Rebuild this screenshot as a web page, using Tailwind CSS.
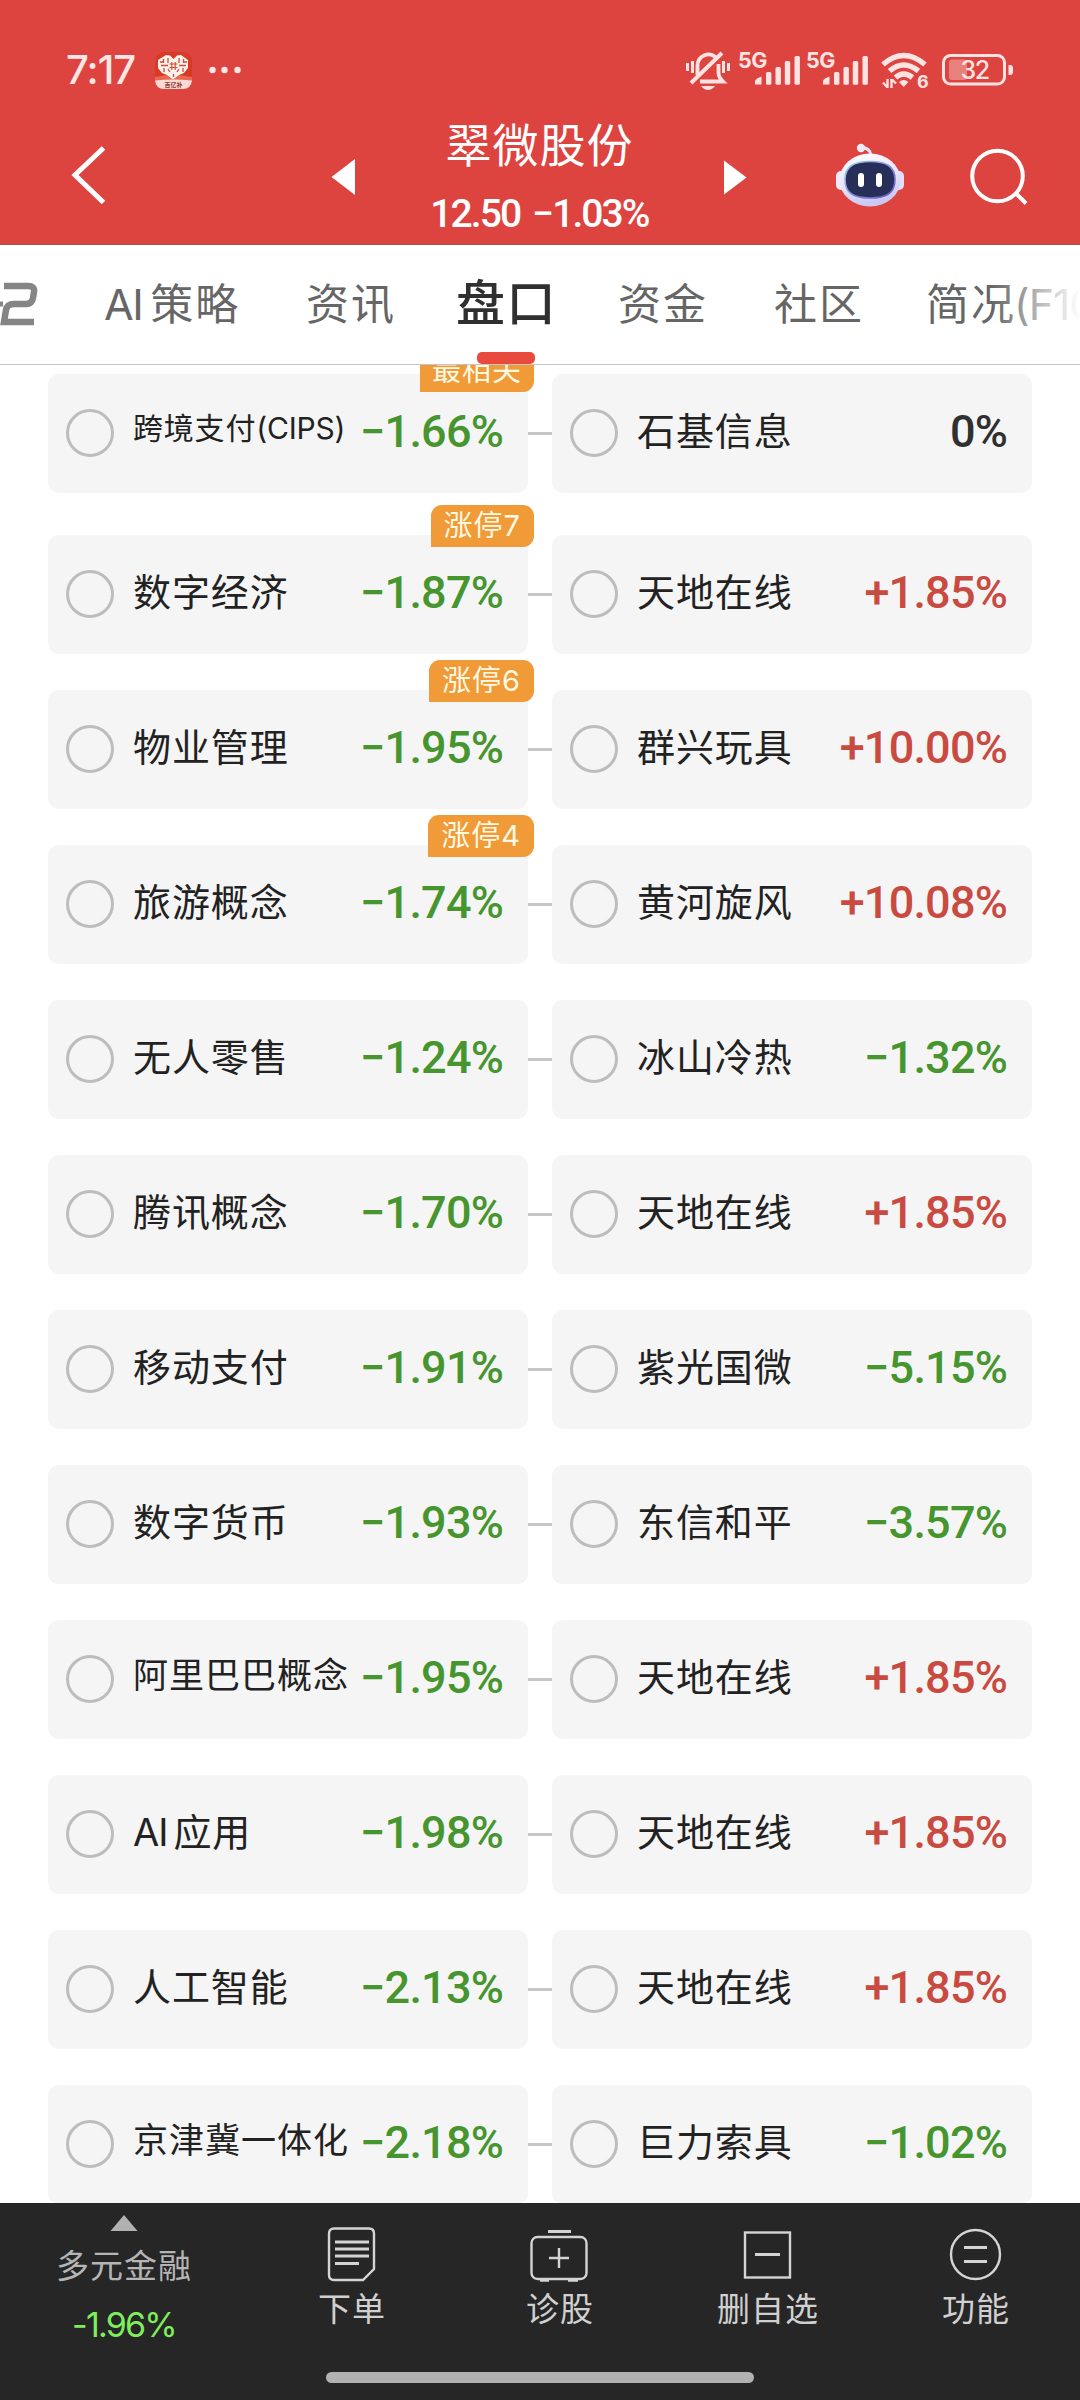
<!DOCTYPE html>
<html lang="zh-CN">
<head>
<meta charset="utf-8">
<title>翠微股份</title>
<script src="https://cdn.jsdelivr.net/npm/@tailwindcss/browser@4"></script>
</head>
<body class="w-[1080px] h-[2400px] overflow-hidden bg-white flex flex-col font-[Inter,'Noto_Sans_CJK_SC',sans-serif]">

<!-- Header -->
<header class="h-[245px] shrink-0 bg-[#dd4440] border-b border-[#a9524e] flex flex-col text-white">
  <div class="h-[92px] pt-[48px] flex items-start">
    <div class="ml-[66px] w-[89px] h-11 leading-[44px] text-[40px] font-medium tracking-[-1px] text-[#fde6e4] font-[Inter]">7:17</div>
    <svg class="mt-1" width="38" height="38" viewBox="0 0 38 38">
      <rect width="37" height="37" rx="9" fill="#d93a25"/>
      <path d="M0 25L18 22L37 25V30H0Z" fill="#e8694f"/>
      <path d="M11 3l4 .5 3.500 3.500 3.500-3.500 4-.5 7 5v8l-4 5-5 2-6 4.500-6-4.500-5-2-4-5V8z" fill="#fff3ec"/>
      <path d="M8.500 7v4M13 6v5M6 13.500h7M24 6v5M28.500 7v4M24 13.500h7M9 16v4M28 16v4M13 17l2 3M24 17l-2 3M18.500 22v3M5 10h4M28 10h4" stroke="#cf4a38" stroke-width="1.300"/>
      <path d="M14.500 12h8M14.500 15.500h8M16.800 10v8M20.200 10v8" stroke="#cf4a38" stroke-width="1.100"/>
      <path d="M0 28.500q18-2 37 0-1 8.500-9 8.500H9q-8 0-9-8.500z" fill="#fbd9d4"/>
      <text x="9.500" y="35" font-size="6" font-weight="700" fill="#8b3a30" font-family="Noto Sans CJK SC">百亿补</text>
    </svg>
    <svg class="ml-4 mt-[18px]" width="32" height="8"><g fill="#fde6e4"><circle cx="3.500" cy="4" r="3.200"/><circle cx="15.500" cy="4" r="3.200"/><circle cx="28.500" cy="4" r="3.200"/></g></svg>
    <!-- status icons -->
    <svg class="ml-[443px]" width="334" height="44" viewBox="684 48 334 44" fill="none" stroke="#fde3e1">
      <g stroke-width="3">
        <path d="M687.500 63v8M692.500 61v12M723.500 61v12M728.500 63v8"/>
        <path d="M697.500 75V65a11 11 0 0 1 18-8" stroke-width="3.800"/>
        <path d="M691 83L722 53" stroke-width="4"/>
        <path d="M718.500 64v9q0 4 4.500 8.500H700" stroke-width="3.800"/>
        <path d="M701 86h14q-3 4-7 4t-7-4z" fill="#fde3e1" stroke="none"/>
      </g>
      <g fill="#fde3e1" stroke="none">
        <g id="sig">
          <text x="738" y="67.500" font-family="Inter" font-size="21.500" font-weight="700" letter-spacing="-0.500">5G</text>
          <path d="M755 84.500v-4l2-2 4.500-2v8z"/>
          <rect x="766" y="72" width="5.400" height="12.700" rx="1.500"/>
          <rect x="775.500" y="67" width="5.400" height="17.700" rx="1.500"/>
          <rect x="784.800" y="61" width="5.400" height="23.700" rx="1.500"/>
          <rect x="794.500" y="56" width="5.400" height="28.700" rx="1.500"/>
        </g>
        <use href="#sig" x="68"/>
      </g>
      <g stroke-width="5.500">
        <path d="M883 64.500Q903.500 46.500 925 64.500"/>
        <path d="M889.500 71Q903.500 59 918.500 71"/>
        <path d="M895.500 77.500Q903.500 70.500 912.500 77.500"/>
      </g>
      <path d="M899 82q4.700-4 9.400 0l-4.700 5z" fill="#fde3e1" stroke="none"/>
      <path d="M887.500 79v9M883 82.500l4 4.500M891.500 88v-9M892 79.500l4 4" stroke-width="2.400"/>
      <text x="917" y="88" fill="#fde3e1" stroke="none" font-family="Inter" font-size="18" font-weight="700">6</text>
      <rect x="943.500" y="55.500" width="61" height="28.500" rx="7" stroke-width="3"/>
      <rect x="949" y="59.500" width="18" height="20.500" rx="3" fill="#e8807c" stroke="none"/>
      <path d="M1008.500 65h1.500q3 0 3 3v4q0 3-3 3h-1.500z" fill="#fde3e1" stroke="none"/>
      <text x="974.500" y="79" text-anchor="middle" fill="#fde3e1" stroke="none" font-family="Inter" font-size="25" font-weight="500" letter-spacing="-1.500">32</text>
    </svg>
  </div>
  <div class="flex-1 flex items-start">
    <svg class="ml-[68px] mt-[50px]" width="40" height="66" viewBox="68 142 40 66"><path d="M103.500 148L75 175L103.500 202.500" fill="none" stroke="#fff" stroke-width="5"/></svg>
    <svg class="ml-[223px] mt-[67px]" width="24" height="36"><path d="M.5 18L24 0v36z" fill="#fff"/></svg>
    <div class="w-[369px] flex flex-col items-center">
      <h1 class="mt-[20px] h-[60px] leading-[60px] text-[46px] font-normal tracking-[1px] font-['Noto_Sans_CJK_SC']">翠微股份</h1>
      <div class="mt-[20px] h-[44px] leading-[44px] text-[39px] font-medium font-[Roboto] tracking-[-1.900px] [word-spacing:4px] whitespace-pre">12.50 −1.03%</div>
    </div>
    <svg class="mt-[68px]" width="23" height="35"><path d="M22.500 17.500L0 .5v34z" fill="#fff"/></svg>
    <svg class="ml-[87px] mt-[50px]" width="72" height="68" viewBox="834 142 72 68">
      <defs>
        <linearGradient id="hd" x1="0" y1="0" x2="0.300" y2="1"><stop offset="0" stop-color="#fff"/><stop offset=".6" stop-color="#e9e3f6"/><stop offset="1" stop-color="#c9c9f4"/></linearGradient>
        <linearGradient id="rim" x1="0" y1="0" x2="1" y2="1"><stop offset="0" stop-color="#9fd3e6"/><stop offset="1" stop-color="#6b4fd0"/></linearGradient>
      </defs>
      <path d="M861 147.500q9 0 10 8" fill="none" stroke="#ece4f4" stroke-width="3"/>
      <circle cx="861" cy="148" r="4.200" fill="#f1eaf6"/>
      <rect x="836" y="171" width="11" height="19" rx="5" fill="#efeafa"/>
      <rect x="893" y="171" width="11" height="19" rx="5" fill="#e3defa"/>
      <ellipse cx="870" cy="180" rx="30.500" ry="26.500" fill="url(#hd)"/>
      <path d="M870 161.500c15 0 25 4 25 18s-9 18.500-25 18.500-25-4.500-25-18.500 10-18 25-18z" fill="#262f57" stroke="url(#rim)" stroke-width="1.600"/>
      <rect x="858" y="173" width="6" height="14" rx="3" fill="#fff"/>
      <rect x="876" y="173" width="6" height="14" rx="3" fill="#fff"/>
    </svg>
    <svg class="ml-[62px] mt-[54px]" width="62" height="62" viewBox="968 146 62 62"><g fill="none" stroke="#fff" stroke-width="4"><circle cx="997.500" cy="176" r="25.300"/><path d="M1015.500 193L1026 203.500"/></g></svg>
  </div>
</header>

<!-- Tabs -->
<nav class="relative h-[120px] shrink-0 border-b border-[#c4c4c4] bg-white z-10 overflow-hidden text-[43px] leading-[118px] tracking-[2px] text-[#666] whitespace-nowrap flex">
  <div class="w-[104px] shrink-0 overflow-hidden flex items-start">
    <svg class="mt-[36px]" width="40" height="46" viewBox="0 281 40 46"><path d="M4 286H28Q35 286 34 292L33 298Q32 304 26 304H14Q7 304 6 310L4 322H34" fill="none" stroke="#858585" stroke-width="6.500"/><path d="M0 301.500h3v5H0z" fill="#858585"/></svg>
  </div>
  <div class="w-[202px] shrink-0"><span class="tracking-[-1.500px] mr-[8px]">AI</span>策略</div>
  <div class="w-[150px] shrink-0">资讯</div>
  <div class="w-[162px] shrink-0 relative text-[49px] font-medium text-[#303030] tracking-[1.500px]">盘口
    <span class="absolute left-[21px] top-[107px] w-[58px] h-[12px] rounded-[5px] bg-[#e84b3e]"></span>
  </div>
  <div class="w-[156px] shrink-0">资金</div>
  <div class="w-[152px] shrink-0">社区</div>
  <div class="shrink-0">简况<span class="tracking-[-1px] -ml-[2px]">(F10)</span></div>
  <div class="absolute right-0 top-0 w-[88px] h-full bg-linear-to-l from-white to-white/0"></div>
</nav>

<!-- Concept list -->
<main id="list" class="h-[1838px] shrink-0 overflow-hidden pt-[9px] px-12 flex flex-col gap-9"></main>

<!-- Bottom bar -->
<footer class="h-[197px] shrink-0 bg-[#262626] flex flex-col text-[33px] tracking-[1px] text-[#d0d0d0]">
  <div class="h-[169px] flex">
    <div class="w-[248px] flex flex-col items-center text-[#b5b5b5]">
      <svg class="mt-[12px]" width="28" height="16"><path d="M14 0L27.500 16H.5z" fill="#b1b1b1"/></svg>
      <div class="mt-[11px] h-[48px] leading-[48px]">多元金融</div>
      <div class="mt-[13px] h-[44px] leading-[44px] text-[34px] font-[Inter] font-normal tracking-[-1.800px] text-[#7eee5c]">-1.96%</div>
    </div>
    <div class="w-[208px] flex flex-col items-center">
      <svg class="mt-[23px]" width="52" height="58" viewBox="0 0 52 58" fill="none" stroke="#d4d4d4" stroke-width="2.400"><path d="M8 2.500H43q5 0 5 5V43L37 54H8q-5 0-5-5V7.500q0-5 5-5z"/><path d="M9 16h34M9 23h34M9 30h34M9 37.500h24" stroke-width="2.800"/></svg>
      <div class="mt-[1px] h-[48px] leading-[48px]">下单</div>
    </div>
    <div class="w-[208px] flex flex-col items-center">
      <svg class="mt-[23px]" width="60" height="58" viewBox="0 0 60 58" fill="none" stroke="#d4d4d4" stroke-width="2.400"><path d="M18 5.500h23" stroke-width="3"/><rect x="1.500" y="11" width="55" height="42" rx="6"/><path d="M29 22v20M19 32h20M10 54.500h9M38 54.500h10"/></svg>
      <div class="mt-[1px] h-[48px] leading-[48px]">诊股</div>
    </div>
    <div class="w-[208px] flex flex-col items-center">
      <svg class="mt-[23px]" width="52" height="58" viewBox="0 0 52 58" fill="none" stroke="#d4d4d4" stroke-width="2.400"><rect x="3" y="6.500" width="45" height="45"/><path d="M13 28.500h25" stroke-width="3"/></svg>
      <div class="mt-[1px] h-[48px] leading-[48px]">删自选</div>
    </div>
    <div class="w-[208px] flex flex-col items-center">
      <svg class="mt-[23px]" width="56" height="58" viewBox="0 0 56 58" fill="none" stroke="#d4d4d4" stroke-width="2.400"><circle cx="27.500" cy="28.500" r="24.500"/><path d="M16 21.500h23M16 35.500h23" stroke-width="2.800"/></svg>
      <div class="mt-[1px] h-[48px] leading-[48px]">功能</div>
    </div>
  </div>
  <div class="mx-auto w-[428px] h-[11px] rounded-full bg-[#b1b1b1]"></div>
</footer>

<script>
const rows = [
  ['跨境支付(CIPS)', '−1.66%', '石基信息', '0%', '最相关'],
  ['数字经济', '−1.87%', '天地在线', '+1.85%', '涨停7'],
  ['物业管理', '−1.95%', '群兴玩具', '+10.00%', '涨停6'],
  ['旅游概念', '−1.74%', '黄河旋风', '+10.08%', '涨停4'],
  ['无人零售', '−1.24%', '冰山冷热', '−1.32%'],
  ['腾讯概念', '−1.70%', '天地在线', '+1.85%'],
  ['移动支付', '−1.91%', '紫光国微', '−5.15%'],
  ['数字货币', '−1.93%', '东信和平', '−3.57%'],
  ['阿里巴巴概念', '−1.95%', '天地在线', '+1.85%'],
  ['AI应用', '−1.98%', '天地在线', '+1.85%'],
  ['人工智能', '−2.13%', '天地在线', '+1.85%'],
  ['京津冀一体化', '−2.18%', '巨力索具', '−1.02%'],
];
const color = v => v[0] === '+' ? 'text-[#c94a40]' : v[0] === '−' ? 'text-[#46952f]' : 'text-[#303030]';
const size = n => n.includes('(') ? 'text-[30px] tracking-[0.8px] pb-[11px]'
  : n.length > 5 ? 'text-[35px] tracking-[1px] pb-[8px]' : 'text-[38px] tracking-[0.9px] pb-[4px]';
const label = n => n.replace('AI', '<span class="tracking-[-1px] mr-[6px]">AI</span>')
  .replace('(CIPS)', '<span class="tracking-[-0.2px]">(CIPS)</span>');
const card = (name, pct) => `
  <div class="w-[480px] h-[119px] rounded-[11px] bg-[#f5f5f5] flex items-center pl-[18px] pr-[25px]">
    <span class="w-12 h-12 -mt-[2px] shrink-0 rounded-full border-[3px] border-[#bdbdbd]"></span>
    <span class="ml-[19px] whitespace-nowrap text-[#222] ${size(name)}">${label(name)}</span>
    <span class="ml-auto whitespace-nowrap font-[Roboto] font-medium text-[45px] tracking-[-0.8px] pb-[3px] ${color(pct)}">${pct}</span>
  </div>`;
document.getElementById('list').innerHTML = rows.map(([a, b, c, d, tag], i) => `
  <div class="relative flex items-center shrink-0 ${i === 0 ? 'mb-[6px]' : ''}">
    ${card(a, b)}<span class="w-6 h-[3px] -mt-[1px] bg-[#c6c6c6]"></span>${card(c, d)}
    ${tag ? `<span class="absolute right-[498px] ${i === 0 ? '-top-6 px-[12px]' : '-top-[30px] px-[13px]'} h-[42px] leading-[42px] rounded-[11px] rounded-bl-none bg-[#f09a38] text-[#fff9e2] text-[29px] tracking-[1px]">${tag}</span>` : ''}
  </div>`).join('');
</script>
</body>
</html>
